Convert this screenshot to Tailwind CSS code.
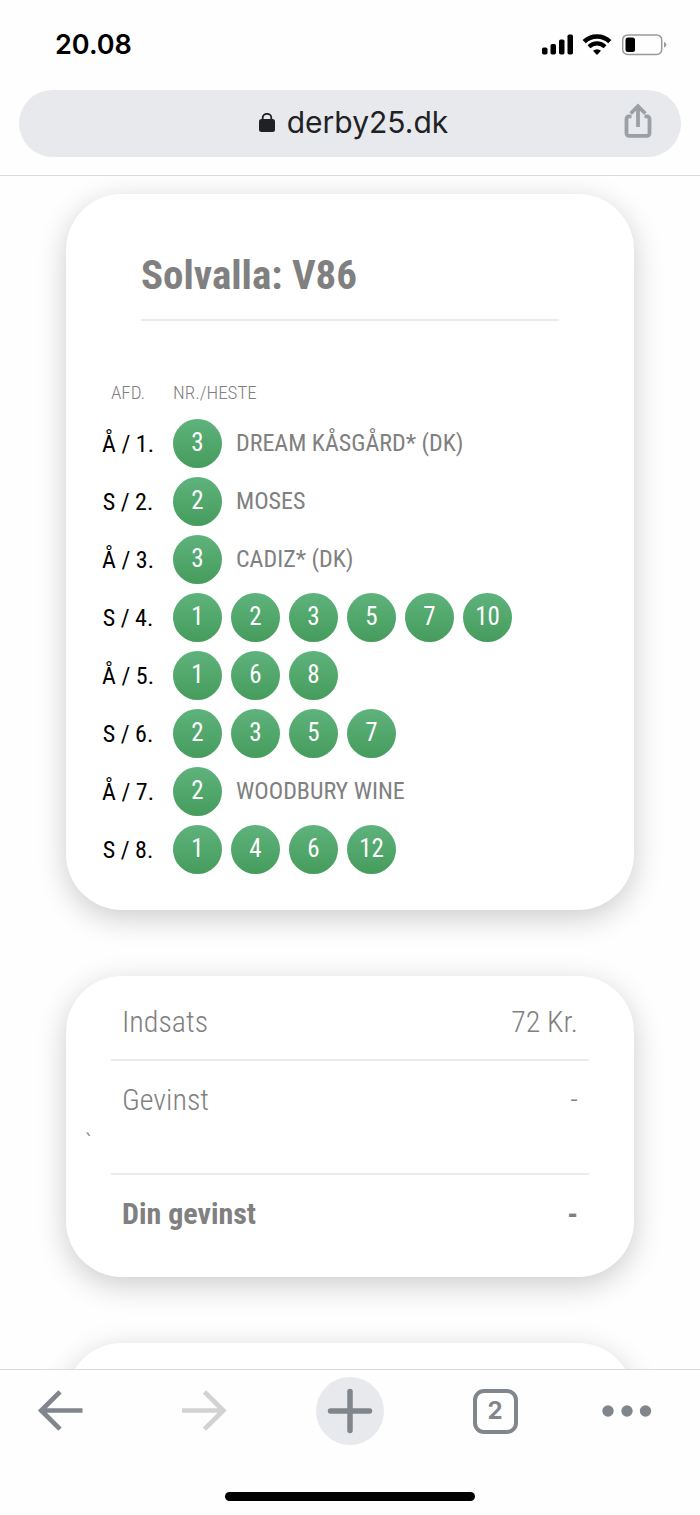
<!DOCTYPE html>
<html lang="da">
<head>
<meta charset="utf-8">
<meta name="viewport" content="width=device-width, initial-scale=1">
<title>Solvalla: V86</title>
<script src="https://cdn.jsdelivr.net/npm/@tailwindcss/browser@4"></script>
</head>
<body class="flex h-screen flex-col overflow-hidden bg-[#fefefe] font-['Roboto_Condensed','Roboto',sans-serif] text-[#808080]">

<header class="shrink-0 border-b border-[#d9dadc] font-['Inter',sans-serif]">
  <div class="flex h-[90px] items-center justify-between pl-[55px] pr-[33px]">
    <time class="text-[27px] font-semibold text-black">20.08</time>
    <div class="flex items-center gap-[9px]">
      <svg class="h-[22px] w-[31px]" viewBox="0 0 31 22" aria-label="Signal">
        <rect x="0" y="13.500" width="5.500" height="7" rx="1.700"/><rect x="8.500" y="10" width="5.500" height="10.500" rx="1.700"/><rect x="17" y="5.500" width="5.500" height="15" rx="1.700"/><rect x="25.500" y="0.500" width="5.500" height="20" rx="1.700"/>
      </svg>
      <svg class="h-[22px] w-[30px]" viewBox="0 0 30 22" aria-label="Wi-Fi">
        <path d="M2.200 7.700a18.200 18.200 0 0 1 25.600 0" fill="none" stroke="#000" stroke-width="4.500"/>
        <path d="M7 12.700a11.400 11.400 0 0 1 16 0" fill="none" stroke="#000" stroke-width="4.100"/>
        <path d="M15 21l-4-4.200a5.800 5.800 0 0 1 8 0z"/>
      </svg>
      <svg class="h-[22px] w-[46px]" viewBox="0 0 46 22" aria-label="Batteri">
        <rect x="1.700" y="0.900" width="39" height="19.600" rx="5" fill="none" stroke="#999" stroke-width="1.500"/>
        <rect x="4.500" y="3.500" width="9.500" height="14.500" rx="2.500"/>
        <path d="M43 7.800q2.400 1.300 2.400 3t-2.400 3z" fill="#999"/>
      </svg>
    </div>
  </div>
  <div class="px-[19px] pb-[18px]">
    <div class="grid h-[67px] grid-cols-[1fr_auto_1fr] items-center rounded-full bg-[#e8e9ed] px-[29px]">
      <span></span>
      <button type="button" class="flex items-center gap-3 pb-[2px] pl-[7px] text-[30px] text-[#202124]">
        <svg class="h-5 w-4" viewBox="0 0 16 20" aria-hidden="true"><rect x="0" y="6" width="16" height="13" rx="2.500" fill="#202124"/><path d="M3.700 7V4.500a4.300 3.700 0 0 1 8.600 0V7" fill="none" stroke="#202124" stroke-width="1.800"/></svg>
        <span>derby25.dk</span>
      </button>
      <button type="button" class="justify-self-end pb-[5px]" aria-label="Del">
        <svg class="h-[36px] w-[28px]" viewBox="0 0 28 36" fill="none" stroke="#9aa0a6" stroke-width="3.800"><path d="M7.500 13.400H5a2.500 2.500 0 0 0-2.500 2.500v14.400a2.500 2.500 0 0 0 2.500 2.500H23a2.500 2.500 0 0 0 2.500-2.500V15.900a2.500 2.500 0 0 0-2.500-2.500H20.500M14 24V4M6.700 10.500L14 3.200l7.300 7.300"/></svg>
      </button>
    </div>
  </div>
</header>

<main class="flex min-h-0 flex-1 flex-col gap-[66px] overflow-hidden px-[66px] pt-[18px]">
  <section class="shrink-0 rounded-[56px] bg-white pb-[32px] pl-[17px] pr-[17px] shadow-[0_8px_30px_rgba(0,0,0,0.2)]">
    <h1 class="mx-[58px] border-b-2 border-[#ebebeb] pb-[19px] pt-[56px] text-[41px] font-bold leading-[50px]">Solvalla: V86</h1>
    <table class="mt-[50px] w-full">
      <thead>
        <tr class="h-[43px] text-[19px] font-light">
          <th class="w-[90px] pt-[2px] font-light">AFD.</th>
          <th class="pt-[2px] text-left font-light">NR./HESTE</th>
        </tr>
      </thead>
      <tbody id="legs" class="text-[24px]"></tbody>
    </table>
  </section>

  <section class="shrink-0 rounded-[56px] bg-white pb-[45px] pt-[28px] text-[30px] font-light leading-[36px] shadow-[0_8px_30px_rgba(0,0,0,0.2)]">
    <div class="mx-[45px] flex justify-between border-b-2 border-[#ebebeb] px-[11px] pb-[19px]"><span>Indsats</span><span>72 Kr.</span></div>
    <div class="mx-[45px] flex justify-between px-[11px] pt-[21px]"><span>Gevinst</span><span>-</span></div>
    <p class="h-[55px] pl-[19px] pt-[11px] text-[24px] leading-7">`</p>
    <div class="mx-[45px] flex justify-between border-t-2 border-[#ebebeb] px-[11px] pt-[21px] font-bold"><span>Din gevinst</span><span>-</span></div>
  </section>

  <section class="h-[300px] shrink-0 rounded-[56px] bg-white shadow-[0_8px_30px_rgba(0,0,0,0.2)]"></section>
</main>

<footer class="shrink-0 border-t border-[#d9dadc] bg-[#fefefe] pb-[14px] pt-[7px]">
  <nav class="flex h-[68px] items-center justify-between px-[26px]">
    <button type="button" aria-label="Tilbage" class="grid h-[68px] w-[68px] place-items-center"><svg class="h-[42px] w-[46px]" viewBox="0 0 46 42" fill="none" stroke="#80868b" stroke-width="4.700"><path d="M45.500 20.500H5M23 1.800L4.200 20.500 23 39.200"/></svg></button>
    <button type="button" aria-label="Frem" disabled class="grid h-[68px] w-[68px] place-items-center"><svg class="h-[42px] w-[46px]" viewBox="0 0 46 42" fill="none" stroke="#d2d2d2" stroke-width="4.700"><path d="M0 20.500H41M22.500 1.800L41.300 20.500 22.500 39.200"/></svg></button>
    <button type="button" aria-label="Ny fane" class="grid size-[68px] place-items-center rounded-full bg-[#e8e9ed]"><svg class="size-[46px]" viewBox="0 0 46 46" fill="none" stroke="#80868b" stroke-width="5.500" stroke-linecap="round"><path d="M23 3.500v39M3.500 23h39"/></svg></button>
    <button type="button" aria-label="Faner" class="grid size-[68px] place-items-center"><span class="grid size-[45px] place-items-center rounded-[11px] border-4 border-[#80868b] font-['Inter',sans-serif] text-[24px] font-bold leading-none text-[#80868b]">2</span></button>
    <button type="button" aria-label="Menu" class="-ml-1 flex h-[68px] w-[72px] items-center"><svg class="h-[12px] w-[50px]" viewBox="0 0 50 12" fill="#80868b"><circle cx="6" cy="6" r="5.700"/><circle cx="25" cy="6" r="5.700"/><circle cx="43.500" cy="6" r="5.700"/></svg></button>
  </nav>
  <div class="mx-auto mt-[47px] h-[9px] w-[250px] rounded-full bg-black"></div>
</footer>

<script>
  const legs = [
    ['Å / 1.', [3], 'DREAM KÅSGÅRD* (DK)'],
    ['S / 2.', [2], 'MOSES'],
    ['Å / 3.', [3], 'CADIZ* (DK)'],
    ['S / 4.', [1, 2, 3, 5, 7, 10], ''],
    ['Å / 5.', [1, 6, 8], ''],
    ['S / 6.', [2, 3, 5, 7], ''],
    ['Å / 7.', [2], 'WOODBURY WINE'],
    ['S / 8.', [1, 4, 6, 12], '']
  ];
  document.getElementById('legs').innerHTML = legs.map(([leg, picks, horse]) => `
    <tr class="h-[58px]">
      <th scope="row" class="pt-px font-normal text-black">${leg}</th>
      <td><div class="flex items-center gap-[9px]">
        ${picks.map(n => `<span class="grid size-[49px] place-items-center rounded-full bg-linear-to-b from-[#5eb27c] to-[#469c5c] text-[25px] text-white">${n}</span>`).join('')}
        ${horse ? `<span class="pl-[5px]">${horse}</span>` : ''}
      </div></td>
    </tr>`).join('');
</script>
</body>
</html>
